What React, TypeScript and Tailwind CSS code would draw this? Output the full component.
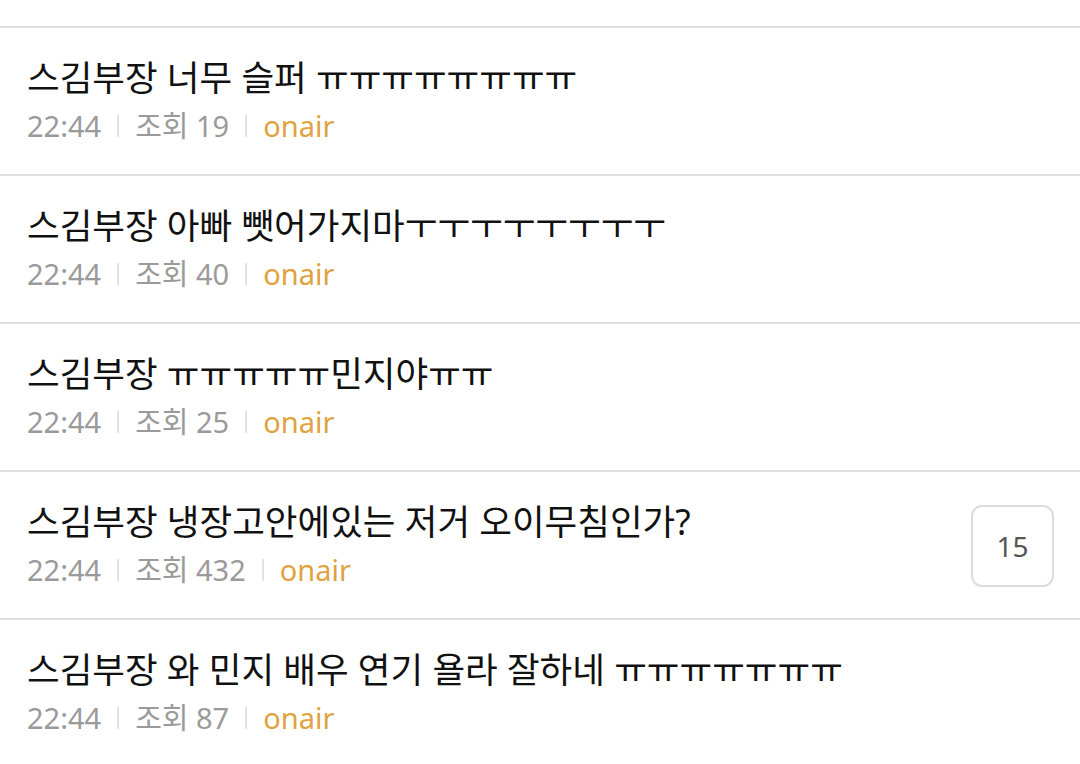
import React from "react";

type Post = { title: string; views: number; comments?: number };

const posts: Post[] = [
  { title: "스김부장 너무 슬퍼 ㅠㅠㅠㅠㅠㅠㅠㅠ", views: 19 },
  { title: "스김부장 아빠 뺏어가지마ㅜㅜㅜㅜㅜㅜㅜㅜ", views: 40 },
  { title: "스김부장 ㅠㅠㅠㅠㅠ민지야ㅠㅠ", views: 25 },
  { title: "스김부장 냉장고안에있는 저거 오이무침인가?", views: 432, comments: 15 },
  { title: "스김부장 와 민지 배우 연기 욜라 잘하네 ㅠㅠㅠㅠㅠㅠㅠ", views: 87 },
];

function Divider() {
  return <span className="mx-[16px] inline-block h-[22px] w-[2px] bg-[#e2e2e2]" />;
}

function PostRow({ post }: { post: Post }) {
  return (
    <li className="flex items-center border-t-2 border-[#e0e0e0] pl-[27px] pr-[26px] pt-[27px] pb-[28px]">
      <div className="flex min-w-0 flex-1 flex-col gap-[7px]">
        <p className="whitespace-nowrap text-[35.5px] leading-[44px] text-[#111]">{post.title}</p>
        <div className="flex items-center text-[29px] leading-[40px] text-[#9a9a9a]">
          <span>22:44</span>
          <Divider />
          <span>조회 {post.views}</span>
          <Divider />
          <span className="text-[#e0a23e]">onair</span>
        </div>
      </div>
      {post.comments !== undefined && (
        <div className="mt-[3px] flex h-[82px] w-[83px] items-center justify-center rounded-[11px] border-2 border-[#dcdcdc] text-[28px] text-[#555]">
          {post.comments}
        </div>
      )}
    </li>
  );
}

export default function App() {
  return (
    <div
      className="h-[764px] w-[1080px] overflow-hidden bg-white pt-[26px]"
      style={{ fontFamily: '"Noto Sans", "Noto Sans CJK KR", sans-serif' }}
    >
      <ul>
        {posts.map((p, i) => (
          <PostRow key={i} post={p} />
        ))}
      </ul>
    </div>
  );
}
